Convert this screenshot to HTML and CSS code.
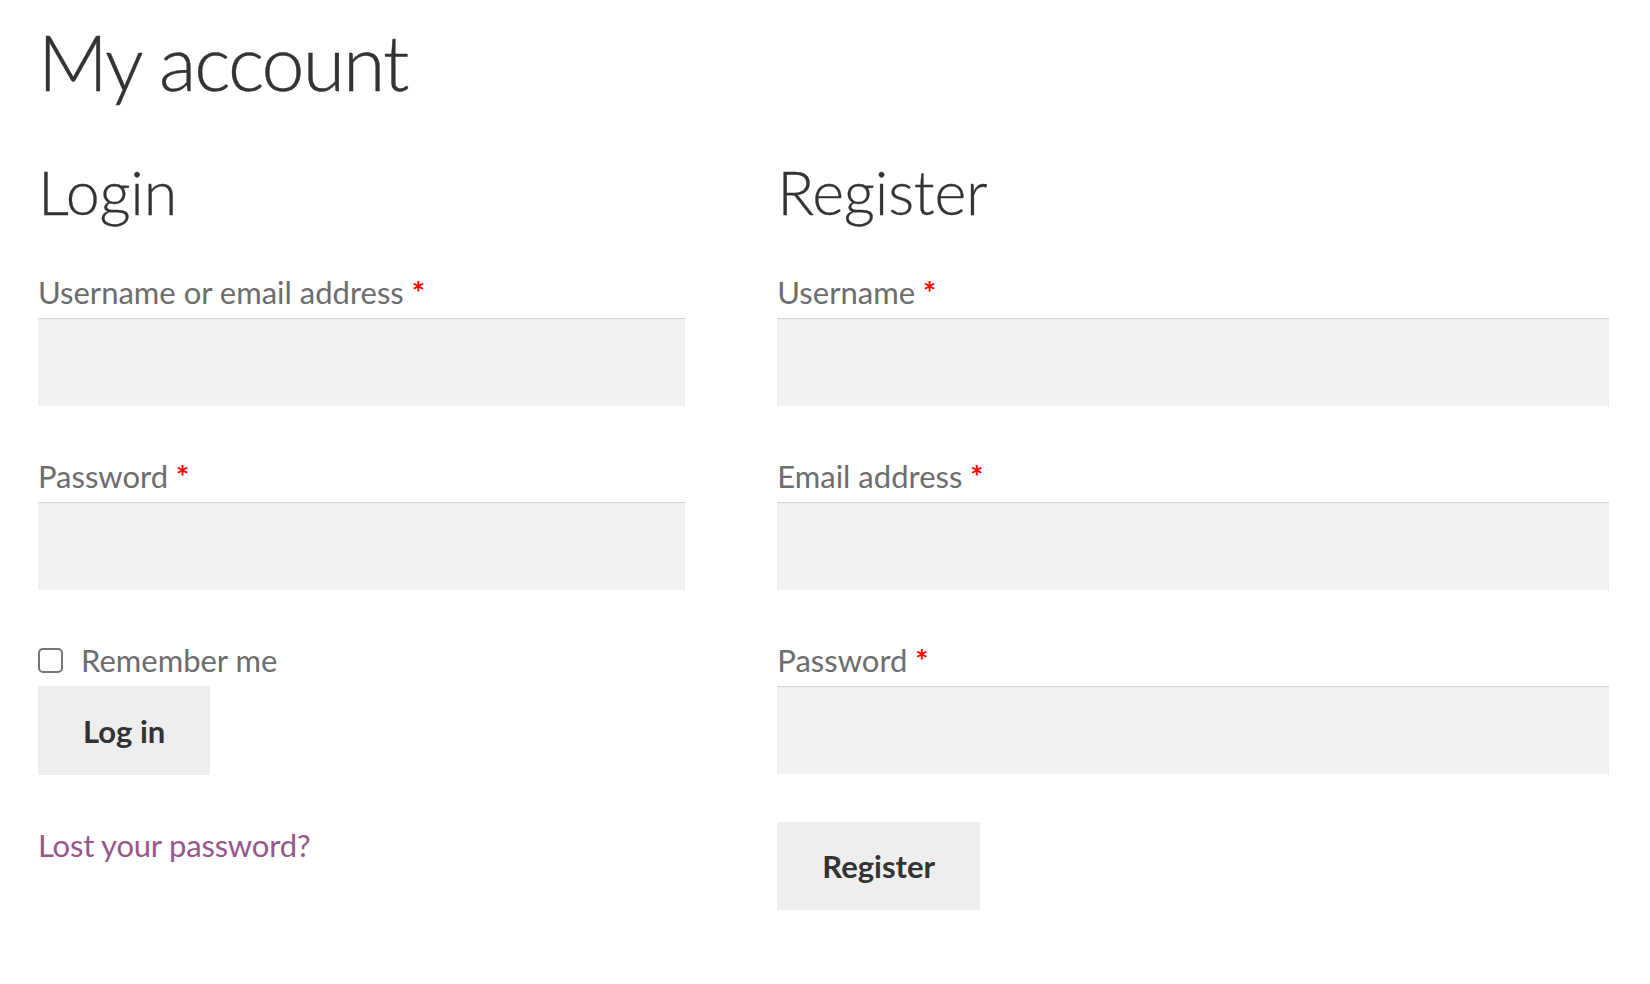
FILE: index.html
```html
<!DOCTYPE html>
<html lang="en">
<head>
<meta charset="utf-8">
<title>My account</title>
<link rel="stylesheet" href="styles.css">
</head>
<body>
<div class="page">
  <h1 class="page-title">My account</h1>
  <div class="columns">
    <section class="col col-login">
      <h2 class="col-title">Login</h2>
      <form class="form">
        <div class="form-row">
          <label class="field-label">Username or email address <span class="required">*</span></label>
          <input class="input" type="text">
        </div>
        <div class="form-row">
          <label class="field-label">Password <span class="required">*</span></label>
          <input class="input" type="password">
        </div>
        <label class="remember"><input class="checkbox" type="checkbox"><span>Remember me</span></label>
        <button class="button" type="button">Log in</button>
        <p class="lost"><a class="lost-link" href="#">Lost your password?</a></p>
      </form>
    </section>
    <section class="col col-register">
      <h2 class="col-title">Register</h2>
      <form class="form">
        <div class="form-row">
          <label class="field-label">Username <span class="required">*</span></label>
          <input class="input" type="text">
        </div>
        <div class="form-row">
          <label class="field-label">Email address <span class="required">*</span></label>
          <input class="input" type="email">
        </div>
        <div class="form-row">
          <label class="field-label">Password <span class="required">*</span></label>
          <input class="input" type="password">
        </div>
        <button class="button button-register" type="button">Register</button>
      </form>
    </section>
  </div>
</div>
</body>
</html>
```

FILE: styles.css
```css
* { box-sizing: border-box; }

html, body {
  margin: 0;
  padding: 0;
  background: #ffffff;
}

body {
  font-family: Lato, "Open Sans", "Liberation Sans", sans-serif;
  color: #6d6d6d;
}

.page {
  width: 1571px;
  margin-left: 38px;
  padding-top: 11px;
}

.page-title {
  margin: 0;
  font-size: 77px;
  line-height: 100px;
  font-weight: 300;
  color: #333333;
  letter-spacing: -1.9px;
  -webkit-text-stroke: 0.4px #333333;
}

.columns {
  display: flex;
  justify-content: space-between;
  margin-top: 41px;
}

.col-login { width: 41.17647%; }
.col-register { width: 52.94118%; }

.col-title {
  margin: 0 0 38px;
  font-size: 61px;
  line-height: 80px;
  font-weight: 300;
  color: #333333;
  letter-spacing: -0.2px;
  -webkit-text-stroke: 0.3px #333333;
}

.form { margin: 0; }

.form-row {
  display: flex;
  flex-direction: column;
  margin-bottom: 48px;
}

.field-label {
  display: block;
  font-size: 31px;
  line-height: 44px;
  height: 44px;
  color: #6d6d6d;
  white-space: nowrap;
}

.required {
  color: #ff0000;
  font-weight: 700;
}

.input {
  display: block;
  width: 100%;
  height: 88px;
  margin-top: 4px;
  border: 0;
  background: #f2f2f2;
  box-shadow: inset 0 1px 1px rgba(0, 0, 0, 0.125);
  font-family: inherit;
  font-size: 31px;
  padding: 0 20px;
  color: #43454b;
  outline: none;
}

.remember {
  display: flex;
  align-items: center;
  height: 44px;
  font-size: 31px;
  line-height: 44px;
  color: #6d6d6d;
}

.checkbox {
  appearance: none;
  -webkit-appearance: none;
  width: 25px;
  height: 25px;
  margin: 0 18px 0 0;
  border: 2px solid #767676;
  border-radius: 5px;
  background: #ffffff;
  flex: none;
}

.button {
  display: block;
  margin-top: 4px;
  height: 89px;
  padding: 0 45px;
  border: 0;
  background: #eeeeee;
  color: #333333;
  font-family: inherit;
  font-size: 31px;
  font-weight: 700;
  cursor: pointer;
}

.button-register {
  margin-top: 0;
  height: 88px;
  padding: 0 45px;
}

.lost {
  margin: 48px 0 0;
  font-size: 31px;
  line-height: 44px;
  letter-spacing: -0.2px;
}

.lost-link {
  color: #96588a;
  text-decoration: none;
}
```
